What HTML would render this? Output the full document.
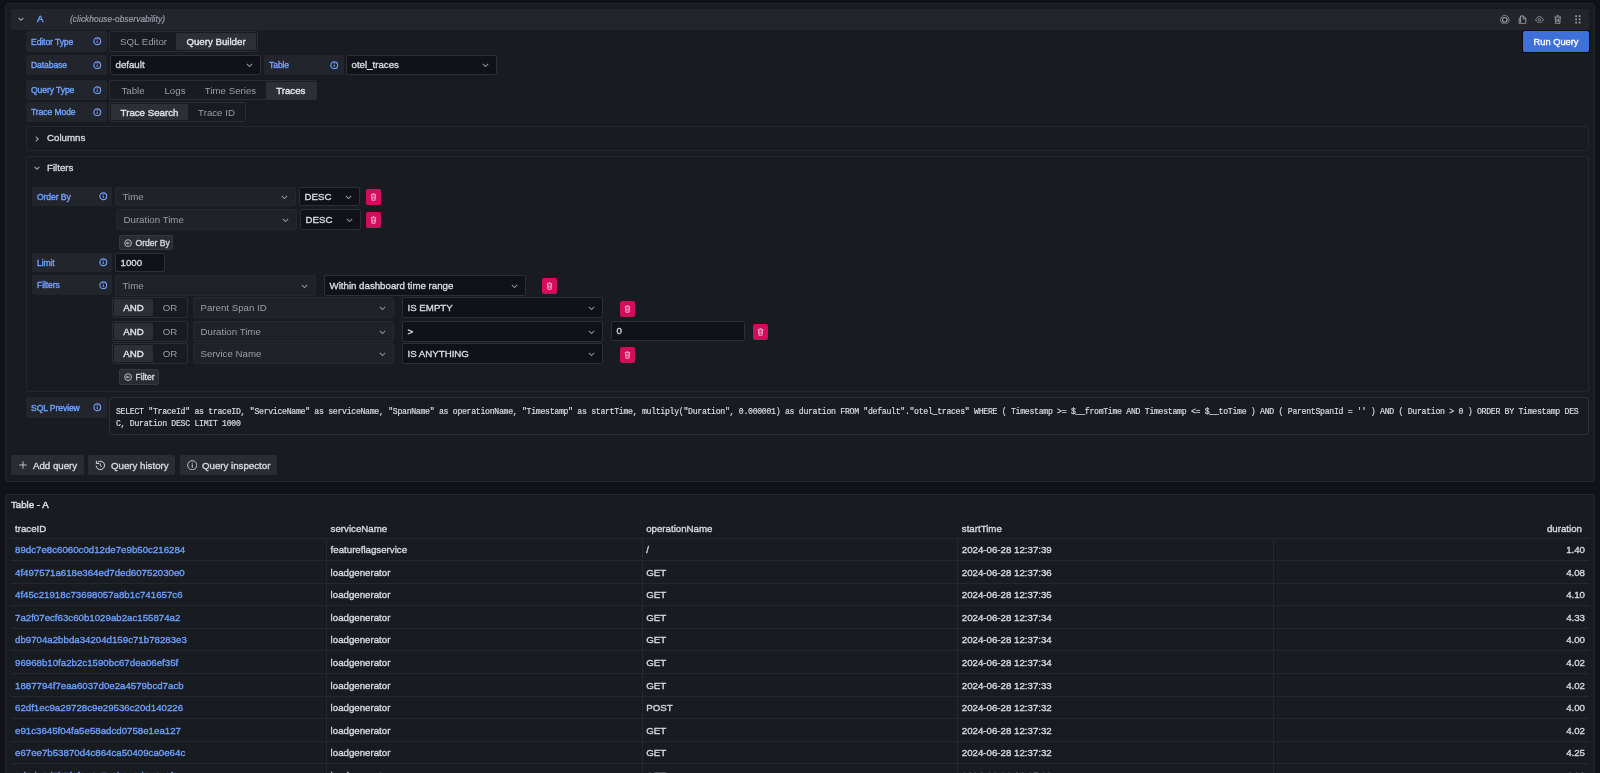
<!DOCTYPE html>
<html><head><meta charset="utf-8"><style>
*{box-sizing:border-box;margin:0;padding:0}
html,body{width:1600px;height:773px;overflow:hidden;background:#111217;font-family:"Liberation Sans",sans-serif;color:#d8d8e2}
.a{position:absolute;white-space:nowrap}
#root{position:absolute;left:0;top:0;width:1600px;height:773px;will-change:transform}
.m{-webkit-text-stroke:0.35px currentColor}
.panel{position:absolute;background:#181b1f;border:1px solid #24272c;border-radius:3px}
.hdr{background:#22252b;border-radius:2px}
.lbl{position:absolute;background:#22252b;border-radius:2px;color:#6e9fff;font-size:8.6px;display:flex;align-items:center;padding-left:5px;padding-top:0.5px;letter-spacing:-0.1px;-webkit-text-stroke:0.4px currentColor;white-space:nowrap}
.lbl .ic{position:absolute;right:5.5px;top:50%;margin-top:-4.25px;width:8.5px;height:8.5px}
.grp{position:absolute;border:1px solid #2a2d33;border-radius:2px}
.rb{position:absolute;font-size:9.7px;color:#9d9daa;display:flex;align-items:center;justify-content:center;border-radius:2px;white-space:nowrap}
.rb.on{border-radius:1px;background:#2c2f35;color:#e4e4ee;-webkit-text-stroke:0.35px currentColor}
.sel{position:absolute;background:#111217;border:1px solid #2c2f35;border-radius:2px;font-size:9.7px;color:#d8d8e2;display:flex;align-items:center;padding-left:4.5px;padding-bottom:1px;-webkit-text-stroke:0.35px currentColor;white-space:nowrap}
.sel.dis{background:#1f2227;border-color:#25282d;color:#9d9daa;-webkit-text-stroke:0;padding-left:6.5px;padding-bottom:1px}
.chev{position:absolute;right:7px;top:50%;margin-top:-2px;width:7px;height:4.5px}
.trash{position:absolute;background:#d10e5c;border-radius:2px}
.trash svg{position:absolute;left:50%;top:50%;margin-left:-3.5px;margin-top:-4px;width:7px;height:8px}
.box{position:absolute;border:1px solid #24272c;border-radius:2px}
.btn{position:absolute;background:#2a2c32;border-radius:2px;font-size:9.7px;color:#d8d8e2;display:flex;align-items:center;-webkit-text-stroke:0.35px currentColor;white-space:nowrap}
.btn svg{position:absolute}
.c{position:absolute;font-size:9.7px;white-space:nowrap}
.hl{position:absolute;height:1px;background:#24272c}
.vl{position:absolute;width:1px;background:#24272c}
</style></head><body><div id="root">
<div class="panel" style="left:5px;top:3px;width:1590px;height:479px"></div>
<div class="a hdr" style="left:11px;top:9px;width:1578px;height:21px"></div>
<svg class="a" style="left:18px;top:17px" width="6" height="4" viewBox="0 0 10 6"><path d="M1 1 L5 5 L9 1" fill="none" stroke="#a0a0ac" stroke-width="1.8"/></svg>
<div class="a" style="left:37px;top:13px;font-size:9.7px;color:#6e9fff;-webkit-text-stroke:0.45px currentColor">A</div>
<div class="a" style="left:70px;top:14px;font-size:8.3px;font-style:italic;letter-spacing:0.07px;color:#9d9daa;-webkit-text-stroke:0.2px currentColor">(clickhouse-observability)</div>
<svg class="a" style="left:1500px;top:14.5px" width="9.5" height="9.5" viewBox="0 0 20 20"><circle cx="10" cy="10" r="9" fill="none" stroke="#9d9daa" stroke-width="1.6"/><circle cx="10" cy="10" r="4.8" fill="none" stroke="#9d9daa" stroke-width="2.4"/><circle cx="10" cy="10" r="2" fill="#0c0d10"/></svg>
<svg class="a" style="left:1518px;top:14.5px" width="8.5" height="9.5" viewBox="0 0 17 20"><path d="M5 2h6l5 5v9.5a2 2 0 0 1-2 2H7a2 2 0 0 1-2-2z" fill="none" stroke="#9d9daa" stroke-width="2"/><path d="M2 5.5v11a3 3 0 0 0 3 3h5" fill="none" stroke="#9d9daa" stroke-width="2"/><path d="M10.5 2v6h6" fill="none" stroke="#9d9daa" stroke-width="2"/></svg>
<svg class="a" style="left:1535px;top:15.5px" width="9" height="7.5" viewBox="0 0 18 15"><path d="M1.2 7.5C3.5 3 6.5 1.2 9 1.2s5.5 1.8 7.8 6.3c-2.3 4.5-5.3 6.3-7.8 6.3S3.5 12 1.2 7.5z" fill="none" stroke="#9d9daa" stroke-width="1.8"/><circle cx="9" cy="7.5" r="2.4" fill="none" stroke="#9d9daa" stroke-width="1.8"/></svg>
<svg class="a" style="left:1553.5px;top:14.5px" width="7.5" height="9.5" viewBox="0 0 15 19"><path d="M5 1.5h5M1 4h13M2.5 4l1 13.5h8l1-13.5M6 7.5v6.5M9 7.5v6.5" fill="none" stroke="#9d9daa" stroke-width="1.9"/></svg>
<svg class="a" style="left:1575px;top:15px" width="6" height="9" viewBox="0 0 12 18"><g fill="#9d9daa"><rect x="0.5" y="0.5" width="3.5" height="3.5"/><rect x="7.5" y="0.5" width="3.5" height="3.5"/><rect x="0.5" y="7" width="3.5" height="3.5"/><rect x="7.5" y="7" width="3.5" height="3.5"/><rect x="0.5" y="13.5" width="3.5" height="3.5"/><rect x="7.5" y="13.5" width="3.5" height="3.5"/></g></svg>
<div class="lbl" style="left:26px;top:31px;width:81px;height:21px">Editor Type<svg class="ic" viewBox="0 0 16 16"><circle cx="8" cy="8" r="6.4" fill="none" stroke="#6e9fff" stroke-width="2.2"/><rect x="7" y="7" width="2" height="4.4" fill="#6e9fff"/><rect x="7" y="4.3" width="2" height="1.8" fill="#6e9fff"/></svg></div>
<div class="grp" style="left:109px;top:31px;width:149px;height:21px"></div>
<div class="rb" style="left:111px;top:33px;width:65px;height:17px">SQL Editor</div>
<div class="rb on" style="left:176px;top:33px;width:80px;height:17px">Query Builder</div>
<div class="a m" style="left:1523px;top:31px;width:66px;height:21px;background:#3d71d9;border-radius:2px;color:#fff;font-size:9.3px;display:flex;align-items:center;justify-content:center;box-shadow:0 0 0 1px #0b0c10">Run Query</div>
<div class="lbl" style="left:26px;top:55px;width:81px;height:20px">Database<svg class="ic" viewBox="0 0 16 16"><circle cx="8" cy="8" r="6.4" fill="none" stroke="#6e9fff" stroke-width="2.2"/><rect x="7" y="7" width="2" height="4.4" fill="#6e9fff"/><rect x="7" y="4.3" width="2" height="1.8" fill="#6e9fff"/></svg></div>
<div class="sel" style="left:110px;top:55px;width:151px;height:20px">default<svg class="chev" viewBox="0 0 10 6"><path d="M1.2 1.2 L5 4.8 L8.8 1.2" fill="none" stroke="#9494a0" stroke-width="1.5"/></svg></div>
<div class="lbl" style="left:264px;top:55px;width:80px;height:20px">Table<svg class="ic" viewBox="0 0 16 16"><circle cx="8" cy="8" r="6.4" fill="none" stroke="#6e9fff" stroke-width="2.2"/><rect x="7" y="7" width="2" height="4.4" fill="#6e9fff"/><rect x="7" y="4.3" width="2" height="1.8" fill="#6e9fff"/></svg></div>
<div class="sel" style="left:346px;top:55px;width:151px;height:20px">otel_traces<svg class="chev" viewBox="0 0 10 6"><path d="M1.2 1.2 L5 4.8 L8.8 1.2" fill="none" stroke="#9494a0" stroke-width="1.5"/></svg></div>
<div class="lbl" style="left:26px;top:80px;width:81px;height:20px">Query Type<svg class="ic" viewBox="0 0 16 16"><circle cx="8" cy="8" r="6.4" fill="none" stroke="#6e9fff" stroke-width="2.2"/><rect x="7" y="7" width="2" height="4.4" fill="#6e9fff"/><rect x="7" y="4.3" width="2" height="1.8" fill="#6e9fff"/></svg></div>
<div class="grp" style="left:109px;top:80px;width:208px;height:20px"></div>
<div class="rb" style="left:111px;top:81px;width:44px;height:18px">Table</div>
<div class="rb" style="left:155px;top:81px;width:40px;height:18px">Logs</div>
<div class="rb" style="left:195px;top:81px;width:71px;height:18px">Time Series</div>
<div class="rb on" style="left:266px;top:81.5px;width:49.5px;height:17px">Traces</div>
<div class="lbl" style="left:26px;top:102px;width:81px;height:20px">Trace Mode<svg class="ic" viewBox="0 0 16 16"><circle cx="8" cy="8" r="6.4" fill="none" stroke="#6e9fff" stroke-width="2.2"/><rect x="7" y="7" width="2" height="4.4" fill="#6e9fff"/><rect x="7" y="4.3" width="2" height="1.8" fill="#6e9fff"/></svg></div>
<div class="grp" style="left:109px;top:102px;width:137px;height:20px"></div>
<div class="rb on" style="left:111px;top:104px;width:77px;height:16px">Trace Search</div>
<div class="rb" style="left:188px;top:104px;width:57px;height:16px">Trace ID</div>
<div class="box" style="left:26px;top:126px;width:1563px;height:25px"></div>
<svg class="a" style="left:35px;top:135.5px" width="4" height="6" viewBox="0 0 6 10"><path d="M1 1 L5 5 L1 9" fill="none" stroke="#a0a0ac" stroke-width="1.8"/></svg>
<div class="a m" style="left:47px;top:132px;font-size:9.7px;color:#d8d8e2">Columns</div>
<div class="box" style="left:26px;top:156px;width:1563px;height:236px"></div>
<svg class="a" style="left:34px;top:166px" width="6" height="4" viewBox="0 0 10 6"><path d="M1 1 L5 5 L9 1" fill="none" stroke="#a0a0ac" stroke-width="1.8"/></svg>
<div class="a m" style="left:47px;top:162px;font-size:9.7px;color:#d8d8e2">Filters</div>
<div class="lbl" style="left:32px;top:187px;width:80px;height:19px">Order By<svg class="ic" style="right:4.5px" viewBox="0 0 16 16"><circle cx="8" cy="8" r="6.4" fill="none" stroke="#6e9fff" stroke-width="2.2"/><rect x="7" y="7" width="2" height="4.4" fill="#6e9fff"/><rect x="7" y="4.3" width="2" height="1.8" fill="#6e9fff"/></svg></div>
<div class="sel dis" style="left:115px;top:187px;width:181px;height:19px">Time<svg class="chev" viewBox="0 0 10 6"><path d="M1.2 1.2 L5 4.8 L8.8 1.2" fill="none" stroke="#9494a0" stroke-width="1.5"/></svg></div>
<div class="sel" style="left:299px;top:187px;width:61px;height:19px">DESC<svg class="chev" viewBox="0 0 10 6"><path d="M1.2 1.2 L5 4.8 L8.8 1.2" fill="none" stroke="#9494a0" stroke-width="1.5"/></svg></div>
<div class="trash" style="left:366px;top:189px;width:14.5px;height:15.5px"><svg viewBox="0 0 14 16"><path d="M5 1.5h4M1.5 3.5h11M3 3.5l.8 11h6.4l.8-11M5.5 6.5v5M8.5 6.5v5" fill="none" stroke="#f7cddd" stroke-width="1.6"/></svg></div>
<div class="sel dis" style="left:116px;top:209px;width:181px;height:21px">Duration Time<svg class="chev" viewBox="0 0 10 6"><path d="M1.2 1.2 L5 4.8 L8.8 1.2" fill="none" stroke="#9494a0" stroke-width="1.5"/></svg></div>
<div class="sel" style="left:300px;top:209px;width:61px;height:21px">DESC<svg class="chev" viewBox="0 0 10 6"><path d="M1.2 1.2 L5 4.8 L8.8 1.2" fill="none" stroke="#9494a0" stroke-width="1.5"/></svg></div>
<div class="trash" style="left:366px;top:212px;width:14.5px;height:15.5px"><svg viewBox="0 0 14 16"><path d="M5 1.5h4M1.5 3.5h11M3 3.5l.8 11h6.4l.8-11M5.5 6.5v5M8.5 6.5v5" fill="none" stroke="#f7cddd" stroke-width="1.6"/></svg></div>
<div class="btn" style="left:119px;top:235px;width:54px;height:15px;padding-left:15.5px;font-size:8.6px;border:1px solid #35383e;background:#2a2c32"><svg style="left:4px;top:2.6px" width="8.2" height="8.2" viewBox="0 0 16 16"><circle cx="8" cy="8" r="6.6" fill="none" stroke="#d8d8e2" stroke-width="1.6"/><path d="M11.5 8H4.8M7.6 5.2L4.8 8l2.8 2.8" fill="none" stroke="#d8d8e2" stroke-width="1.6"/></svg>Order By</div>
<div class="lbl" style="left:32px;top:253px;width:80px;height:19px">Limit<svg class="ic" style="right:4.5px" viewBox="0 0 16 16"><circle cx="8" cy="8" r="6.4" fill="none" stroke="#6e9fff" stroke-width="2.2"/><rect x="7" y="7" width="2" height="4.4" fill="#6e9fff"/><rect x="7" y="4.3" width="2" height="1.8" fill="#6e9fff"/></svg></div>
<div class="sel" style="left:115px;top:253px;width:50px;height:19px">1000</div>
<div class="lbl" style="left:32px;top:275px;width:80px;height:20px">Filters<svg class="ic" style="right:4.5px" viewBox="0 0 16 16"><circle cx="8" cy="8" r="6.4" fill="none" stroke="#6e9fff" stroke-width="2.2"/><rect x="7" y="7" width="2" height="4.4" fill="#6e9fff"/><rect x="7" y="4.3" width="2" height="1.8" fill="#6e9fff"/></svg></div>
<div class="sel dis" style="left:115px;top:275px;width:201px;height:21px">Time<svg class="chev" viewBox="0 0 10 6"><path d="M1.2 1.2 L5 4.8 L8.8 1.2" fill="none" stroke="#9494a0" stroke-width="1.5"/></svg></div>
<div class="sel" style="left:324px;top:275px;width:202px;height:21px">Within dashboard time range<svg class="chev" viewBox="0 0 10 6"><path d="M1.2 1.2 L5 4.8 L8.8 1.2" fill="none" stroke="#9494a0" stroke-width="1.5"/></svg></div>
<div class="trash" style="left:542px;top:278px;width:14.5px;height:15.5px"><svg viewBox="0 0 14 16"><path d="M5 1.5h4M1.5 3.5h11M3 3.5l.8 11h6.4l.8-11M5.5 6.5v5M8.5 6.5v5" fill="none" stroke="#f7cddd" stroke-width="1.6"/></svg></div>
<div class="grp" style="left:112px;top:297px;width:76px;height:21px"></div>
<div class="rb on" style="left:114px;top:299px;width:39px;height:17px;padding-bottom:1px">AND</div>
<div class="rb" style="left:153px;top:299px;width:34px;height:17px;padding-bottom:1px">OR</div>
<div class="sel dis" style="left:193px;top:297px;width:201px;height:21px">Parent Span ID<svg class="chev" viewBox="0 0 10 6"><path d="M1.2 1.2 L5 4.8 L8.8 1.2" fill="none" stroke="#9494a0" stroke-width="1.5"/></svg></div>
<div class="sel" style="left:402px;top:297px;width:201px;height:21px">IS EMPTY<svg class="chev" viewBox="0 0 10 6"><path d="M1.2 1.2 L5 4.8 L8.8 1.2" fill="none" stroke="#9494a0" stroke-width="1.5"/></svg></div>
<div class="grp" style="left:112px;top:321px;width:76px;height:21px"></div>
<div class="rb on" style="left:114px;top:323px;width:39px;height:17px;padding-bottom:1px">AND</div>
<div class="rb" style="left:153px;top:323px;width:34px;height:17px;padding-bottom:1px">OR</div>
<div class="sel dis" style="left:193px;top:321px;width:201px;height:21px">Duration Time<svg class="chev" viewBox="0 0 10 6"><path d="M1.2 1.2 L5 4.8 L8.8 1.2" fill="none" stroke="#9494a0" stroke-width="1.5"/></svg></div>
<div class="sel" style="left:402px;top:321px;width:201px;height:21px">&gt;<svg class="chev" viewBox="0 0 10 6"><path d="M1.2 1.2 L5 4.8 L8.8 1.2" fill="none" stroke="#9494a0" stroke-width="1.5"/></svg></div>
<div class="grp" style="left:112px;top:343px;width:76px;height:21px"></div>
<div class="rb on" style="left:114px;top:345px;width:39px;height:17px;padding-bottom:1px">AND</div>
<div class="rb" style="left:153px;top:345px;width:34px;height:17px;padding-bottom:1px">OR</div>
<div class="sel dis" style="left:193px;top:343px;width:201px;height:21px">Service Name<svg class="chev" viewBox="0 0 10 6"><path d="M1.2 1.2 L5 4.8 L8.8 1.2" fill="none" stroke="#9494a0" stroke-width="1.5"/></svg></div>
<div class="sel" style="left:402px;top:343px;width:201px;height:21px">IS ANYTHING<svg class="chev" viewBox="0 0 10 6"><path d="M1.2 1.2 L5 4.8 L8.8 1.2" fill="none" stroke="#9494a0" stroke-width="1.5"/></svg></div>
<div class="trash" style="left:620px;top:301px;width:14.5px;height:15.5px"><svg viewBox="0 0 14 16"><path d="M5 1.5h4M1.5 3.5h11M3 3.5l.8 11h6.4l.8-11M5.5 6.5v5M8.5 6.5v5" fill="none" stroke="#f7cddd" stroke-width="1.6"/></svg></div>
<div class="sel" style="left:611px;top:321px;width:134px;height:20px">0</div>
<div class="trash" style="left:753px;top:324px;width:14.5px;height:15.5px"><svg viewBox="0 0 14 16"><path d="M5 1.5h4M1.5 3.5h11M3 3.5l.8 11h6.4l.8-11M5.5 6.5v5M8.5 6.5v5" fill="none" stroke="#f7cddd" stroke-width="1.6"/></svg></div>
<div class="trash" style="left:620px;top:347px;width:14.5px;height:15.5px"><svg viewBox="0 0 14 16"><path d="M5 1.5h4M1.5 3.5h11M3 3.5l.8 11h6.4l.8-11M5.5 6.5v5M8.5 6.5v5" fill="none" stroke="#f7cddd" stroke-width="1.6"/></svg></div>
<div class="btn" style="left:119px;top:369px;width:40px;height:16px;padding-left:15.5px;font-size:8.6px;border:1px solid #35383e;background:#2a2c32"><svg style="left:4px;top:3px" width="8.2" height="8.2" viewBox="0 0 16 16"><circle cx="8" cy="8" r="6.6" fill="none" stroke="#d8d8e2" stroke-width="1.6"/><path d="M11.5 8H4.8M7.6 5.2L4.8 8l2.8 2.8" fill="none" stroke="#d8d8e2" stroke-width="1.6"/></svg>Filter</div>
<div class="lbl" style="left:26px;top:397px;width:81px;height:21px">SQL Preview<svg class="ic" viewBox="0 0 16 16"><circle cx="8" cy="8" r="6.4" fill="none" stroke="#6e9fff" stroke-width="2.2"/><rect x="7" y="7" width="2" height="4.4" fill="#6e9fff"/><rect x="7" y="4.3" width="2" height="1.8" fill="#6e9fff"/></svg></div>
<div class="box" style="left:109px;top:397px;width:1480px;height:38px;border-color:#2c2f35"></div>
<div class="a" style="left:116px;top:406px;font-family:'Liberation Mono',monospace;font-size:8.2px;letter-spacing:-0.30px;line-height:12px;color:#d8d8e2;white-space:pre;-webkit-text-stroke:0.2px currentColor">SELECT "TraceId" as traceID, "ServiceName" as serviceName, "SpanName" as operationName, "Timestamp" as startTime, multiply("Duration", 0.000001) as duration FROM "default"."otel_traces" WHERE ( Timestamp &gt;= $__fromTime AND Timestamp &lt;= $__toTime ) AND ( ParentSpanId = '' ) AND ( Duration &gt; 0 ) ORDER BY Timestamp DES<br>C, Duration DESC LIMIT 1000</div>
<div class="btn" style="left:11px;top:455px;width:73px;height:20px;padding-left:22px"><svg style="left:7.5px;top:6px" width="8" height="8" viewBox="0 0 16 16"><path d="M8 0.5v15M0.5 8h15" stroke="#d8d8e2" stroke-width="1.7"/></svg>Add query</div>
<div class="btn" style="left:88px;top:455px;width:87px;height:20px;padding-left:23px"><svg style="left:7px;top:4.5px" width="10.5" height="10.5" viewBox="0 0 20 20"><path d="M5 4.2A8 8 0 1 1 2.2 11" fill="none" stroke="#d8d8e2" stroke-width="1.9"/><path d="M2.6 1.5v5.2h5.2" fill="none" stroke="#d8d8e2" stroke-width="1.9"/><path d="M10 6.5v4l2.8 2" fill="none" stroke="#d8d8e2" stroke-width="1.9"/></svg>Query history</div>
<div class="btn" style="left:180px;top:455px;width:97px;height:20px;padding-left:22px"><svg style="left:6.5px;top:4.5px" width="10.5" height="10.5" viewBox="0 0 16 16"><circle cx="8" cy="8" r="7" fill="none" stroke="#d8d8e2" stroke-width="1.3"/><rect x="7.3" y="6.8" width="1.4" height="5" fill="#d8d8e2"/><rect x="7.3" y="4" width="1.4" height="1.4" fill="#d8d8e2"/></svg>Query inspector</div>
<div class="panel" style="left:5px;top:494px;width:1590px;height:290px"></div>
<div class="a" style="left:11px;top:499px;font-size:9.7px;color:#d8d8e2;-webkit-text-stroke:0.5px currentColor">Table - A</div>
<div class="c m" style="left:15.0px;top:523px;color:#d8d8e2">traceID</div>
<div class="c m" style="left:330.6px;top:523px;color:#d8d8e2">serviceName</div>
<div class="c m" style="left:646.2px;top:523px;color:#d8d8e2">operationName</div>
<div class="c m" style="left:961.8px;top:523px;color:#d8d8e2">startTime</div>
<div class="c m" style="right:18px;top:523px;color:#d8d8e2">duration</div>
<div class="hl" style="left:11px;top:538px;width:1578px"></div>
<div class="hl" style="left:11px;top:560px;width:1578px"></div>
<div class="c m" style="left:15.0px;top:544.0px;color:#6e9fff">89dc7e8c6060c0d12de7e9b50c216284</div>
<div class="c m" style="left:330.6px;top:544.0px;color:#d8d8e2">featureflagservice</div>
<div class="c m" style="left:646.2px;top:544.0px;color:#d8d8e2">/</div>
<div class="c m" style="left:961.8px;top:544.0px;color:#d8d8e2">2024-06-28 12:37:39</div>
<div class="c m" style="right:15px;top:544.0px;color:#d8d8e2">1.40</div>
<div class="hl" style="left:11px;top:583px;width:1578px"></div>
<div class="c m" style="left:15.0px;top:566.6px;color:#6e9fff">4f497571a618e364ed7ded60752030e0</div>
<div class="c m" style="left:330.6px;top:566.6px;color:#d8d8e2">loadgenerator</div>
<div class="c m" style="left:646.2px;top:566.6px;color:#d8d8e2">GET</div>
<div class="c m" style="left:961.8px;top:566.6px;color:#d8d8e2">2024-06-28 12:37:36</div>
<div class="c m" style="right:15px;top:566.6px;color:#d8d8e2">4.08</div>
<div class="hl" style="left:11px;top:605px;width:1578px"></div>
<div class="c m" style="left:15.0px;top:589.2px;color:#6e9fff">4f45c21918c73698057a8b1c741657c6</div>
<div class="c m" style="left:330.6px;top:589.2px;color:#d8d8e2">loadgenerator</div>
<div class="c m" style="left:646.2px;top:589.2px;color:#d8d8e2">GET</div>
<div class="c m" style="left:961.8px;top:589.2px;color:#d8d8e2">2024-06-28 12:37:35</div>
<div class="c m" style="right:15px;top:589.2px;color:#d8d8e2">4.10</div>
<div class="hl" style="left:11px;top:628px;width:1578px"></div>
<div class="c m" style="left:15.0px;top:611.8px;color:#6e9fff">7a2f07ecf63c60b1029ab2ac155874a2</div>
<div class="c m" style="left:330.6px;top:611.8px;color:#d8d8e2">loadgenerator</div>
<div class="c m" style="left:646.2px;top:611.8px;color:#d8d8e2">GET</div>
<div class="c m" style="left:961.8px;top:611.8px;color:#d8d8e2">2024-06-28 12:37:34</div>
<div class="c m" style="right:15px;top:611.8px;color:#d8d8e2">4.33</div>
<div class="hl" style="left:11px;top:650px;width:1578px"></div>
<div class="c m" style="left:15.0px;top:634.4px;color:#6e9fff">db9704a2bbda34204d159c71b78283e3</div>
<div class="c m" style="left:330.6px;top:634.4px;color:#d8d8e2">loadgenerator</div>
<div class="c m" style="left:646.2px;top:634.4px;color:#d8d8e2">GET</div>
<div class="c m" style="left:961.8px;top:634.4px;color:#d8d8e2">2024-06-28 12:37:34</div>
<div class="c m" style="right:15px;top:634.4px;color:#d8d8e2">4.00</div>
<div class="hl" style="left:11px;top:673px;width:1578px"></div>
<div class="c m" style="left:15.0px;top:657.0px;color:#6e9fff">96968b10fa2b2c1590bc67dea06ef35f</div>
<div class="c m" style="left:330.6px;top:657.0px;color:#d8d8e2">loadgenerator</div>
<div class="c m" style="left:646.2px;top:657.0px;color:#d8d8e2">GET</div>
<div class="c m" style="left:961.8px;top:657.0px;color:#d8d8e2">2024-06-28 12:37:34</div>
<div class="c m" style="right:15px;top:657.0px;color:#d8d8e2">4.02</div>
<div class="hl" style="left:11px;top:696px;width:1578px"></div>
<div class="c m" style="left:15.0px;top:679.5px;color:#6e9fff">1887794f7eaa6037d0e2a4579bcd7acb</div>
<div class="c m" style="left:330.6px;top:679.5px;color:#d8d8e2">loadgenerator</div>
<div class="c m" style="left:646.2px;top:679.5px;color:#d8d8e2">GET</div>
<div class="c m" style="left:961.8px;top:679.5px;color:#d8d8e2">2024-06-28 12:37:33</div>
<div class="c m" style="right:15px;top:679.5px;color:#d8d8e2">4.02</div>
<div class="hl" style="left:11px;top:718px;width:1578px"></div>
<div class="c m" style="left:15.0px;top:702.1px;color:#6e9fff">62df1ec9a29728c9e29536c20d140226</div>
<div class="c m" style="left:330.6px;top:702.1px;color:#d8d8e2">loadgenerator</div>
<div class="c m" style="left:646.2px;top:702.1px;color:#d8d8e2">POST</div>
<div class="c m" style="left:961.8px;top:702.1px;color:#d8d8e2">2024-06-28 12:37:32</div>
<div class="c m" style="right:15px;top:702.1px;color:#d8d8e2">4.00</div>
<div class="hl" style="left:11px;top:741px;width:1578px"></div>
<div class="c m" style="left:15.0px;top:724.7px;color:#6e9fff">e91c3645f04fa5e58adcd0758e1ea127</div>
<div class="c m" style="left:330.6px;top:724.7px;color:#d8d8e2">loadgenerator</div>
<div class="c m" style="left:646.2px;top:724.7px;color:#d8d8e2">GET</div>
<div class="c m" style="left:961.8px;top:724.7px;color:#d8d8e2">2024-06-28 12:37:32</div>
<div class="c m" style="right:15px;top:724.7px;color:#d8d8e2">4.02</div>
<div class="hl" style="left:11px;top:763px;width:1578px"></div>
<div class="c m" style="left:15.0px;top:747.3px;color:#6e9fff">e67ee7b53870d4c864ca50409ca0e64c</div>
<div class="c m" style="left:330.6px;top:747.3px;color:#d8d8e2">loadgenerator</div>
<div class="c m" style="left:646.2px;top:747.3px;color:#d8d8e2">GET</div>
<div class="c m" style="left:961.8px;top:747.3px;color:#d8d8e2">2024-06-28 12:37:32</div>
<div class="c m" style="right:15px;top:747.3px;color:#d8d8e2">4.25</div>
<div class="hl" style="left:11px;top:786px;width:1578px"></div>
<div class="c m" style="left:15.0px;top:769.9px;color:#6e9fff">8d1de1d5b5f1f2a4e7c9b2a6d1c4e8f0</div>
<div class="c m" style="left:330.6px;top:769.9px;color:#d8d8e2">loadgenerator</div>
<div class="c m" style="left:646.2px;top:769.9px;color:#d8d8e2">GET</div>
<div class="c m" style="left:961.8px;top:769.9px;color:#d8d8e2">2024-06-28 12:37:31</div>
<div class="c m" style="right:15px;top:769.9px;color:#d8d8e2">4.01</div>
<div class="vl" style="left:326px;top:538px;height:240px"></div>
<div class="vl" style="left:642px;top:538px;height:240px"></div>
<div class="vl" style="left:957px;top:538px;height:240px"></div>
<div class="vl" style="left:1273px;top:538px;height:240px"></div>
</div></body></html>
